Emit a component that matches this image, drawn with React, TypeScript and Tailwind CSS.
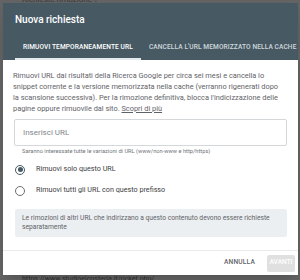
import React, { useState } from "react";

const Radio = ({ checked, label, onClick }: { checked: boolean; label: string; onClick: () => void }) => (
  <button onClick={onClick} className="flex items-center h-[21px] w-full text-left">
    <span
      className={`ml-[1px] w-[10px] h-[10px] rounded-full border-[1.5px] flex items-center justify-center ${
        checked ? "border-[#455a64]" : "border-[#6f6f6f]"
      }`}
    >
      {checked && <span className="w-[5px] h-[5px] rounded-full bg-[#455a64]" />}
    </span>
    <span className="ml-[11px] text-[7.2px] text-[#3c4043]">{label}</span>
  </button>
);

const App = () => {
  const [tab, setTab] = useState(0);
  const [mode, setMode] = useState(0);
  const [url, setUrl] = useState("");

  return (
    <div
      className="relative w-[300px] h-[280px] overflow-hidden bg-[#636363]"
      style={{ fontFamily: "Roboto, 'Liberation Sans', sans-serif" }}
    >
      {/* page behind the overlay */}
      <div className="flex flex-col justify-between h-full px-[22px]">
        <div className="text-[8px] leading-[8px] text-[#3a3a3a] -mt-[4px]">Richieste rimozione ?</div>
        <div className="flex gap-[70px] text-[7px] leading-[8px] text-[#2e2e2e] -mb-[3px]">
          <span>Inizia con: https://www.studioelcosteria.it/ricket.php/</span>
          <span>Rimuovi</span>
        </div>
      </div>

      {/* Modal */}
      <div className="absolute left-[3px] top-[3px] w-[295px] h-[272px] bg-white flex flex-col shadow-lg">
        <div className="bg-[#475a64] h-[57px] flex flex-col">
          <div className="h-[33px] pt-[11px] pl-[12px] text-[10px] leading-[12px] font-medium text-white">
            Nuova richiesta
          </div>
          <div className="flex h-[24px] pl-[12px] whitespace-nowrap overflow-hidden">
            <button
              onClick={() => setTab(0)}
              className={`relative h-full px-[8px] text-[6.6px] font-medium tracking-[0.1px] ${
                tab === 0 ? "text-white" : "text-[#cfd8dc]"
              }`}
            >
              RIMUOVI TEMPORANEAMENTE URL
              {tab === 0 && <span className="absolute left-0 right-0 bottom-0 h-[2px] bg-[#e3eaee]" />}
            </button>
            <button
              onClick={() => setTab(1)}
              className={`relative h-full px-[8px] text-[6.6px] font-medium tracking-[0.1px] ${
                tab === 1 ? "text-white" : "text-[#cfd8dc]"
              }`}
            >
              CANCELLA L'URL MEMORIZZATO NELLA CACHE
              {tab === 1 && <span className="absolute left-0 right-0 bottom-0 h-[2px] bg-[#e3eaee]" />}
            </button>
          </div>
        </div>

        <div className="flex-1 px-[11px] pt-[10px]">
          <p className="text-[7.4px] leading-[11px] text-[#5f6368] -ml-[1px] pr-[8px]">
            Rimuovi URL dai risultati della Ricerca Google per circa sei mesi e cancella lo snippet corrente e la
            versione memorizzata nella cache (verranno rigenerati dopo la scansione successiva). Per la rimozione
            definitiva, blocca l'indicizzazione delle pagine oppure rimuovile dal sito.{" "}
            <span className="underline">Scopri di più</span>
          </p>
          <input
            value={url}
            onChange={(e) => setUrl(e.target.value)}
            placeholder="Inserisci URL"
            className="mt-[5px] w-full h-[27px] border border-[#d5d8db] rounded-[2px] px-[8px] text-[8px] text-[#3c4043] placeholder:text-[#80868b] outline-none"
          />
          <div className="mt-[2px] pl-[8px] text-[5.7px] leading-[7px] text-[#70757a]">
            Saranno interessate tutte le variazioni di URL (www/non-www e http/https)
          </div>
          <div className="mt-[4px]">
            <Radio checked={mode === 0} label="Rimuovi solo questo URL" onClick={() => setMode(0)} />
            <Radio checked={mode === 1} label="Rimuovi tutti gli URL con questo prefisso" onClick={() => setMode(1)} />
          </div>
          <div className="mt-[8px] ml-[1px] bg-[#eceff1] rounded-[2px] px-[7px] py-[5px] text-[6.7px] leading-[9px] text-[#5f6368]">
            Le rimozioni di altri URL che indirizzano a questo contenuto devono essere richieste separatamente
          </div>
        </div>

        <div className="border-t border-[#e8eaed] h-[25px] flex items-center justify-end pr-[3px]">
          <button className="text-[6.6px] font-medium tracking-[0.2px] text-[#5f6368] mr-[12px]">ANNULLA</button>
          <button className="w-[28px] h-[17px] bg-[#e0e0e0] rounded-[2px] text-[6.6px] font-medium text-white">
            AVANTI
          </button>
        </div>
      </div>
    </div>
  );
};

export default App;
